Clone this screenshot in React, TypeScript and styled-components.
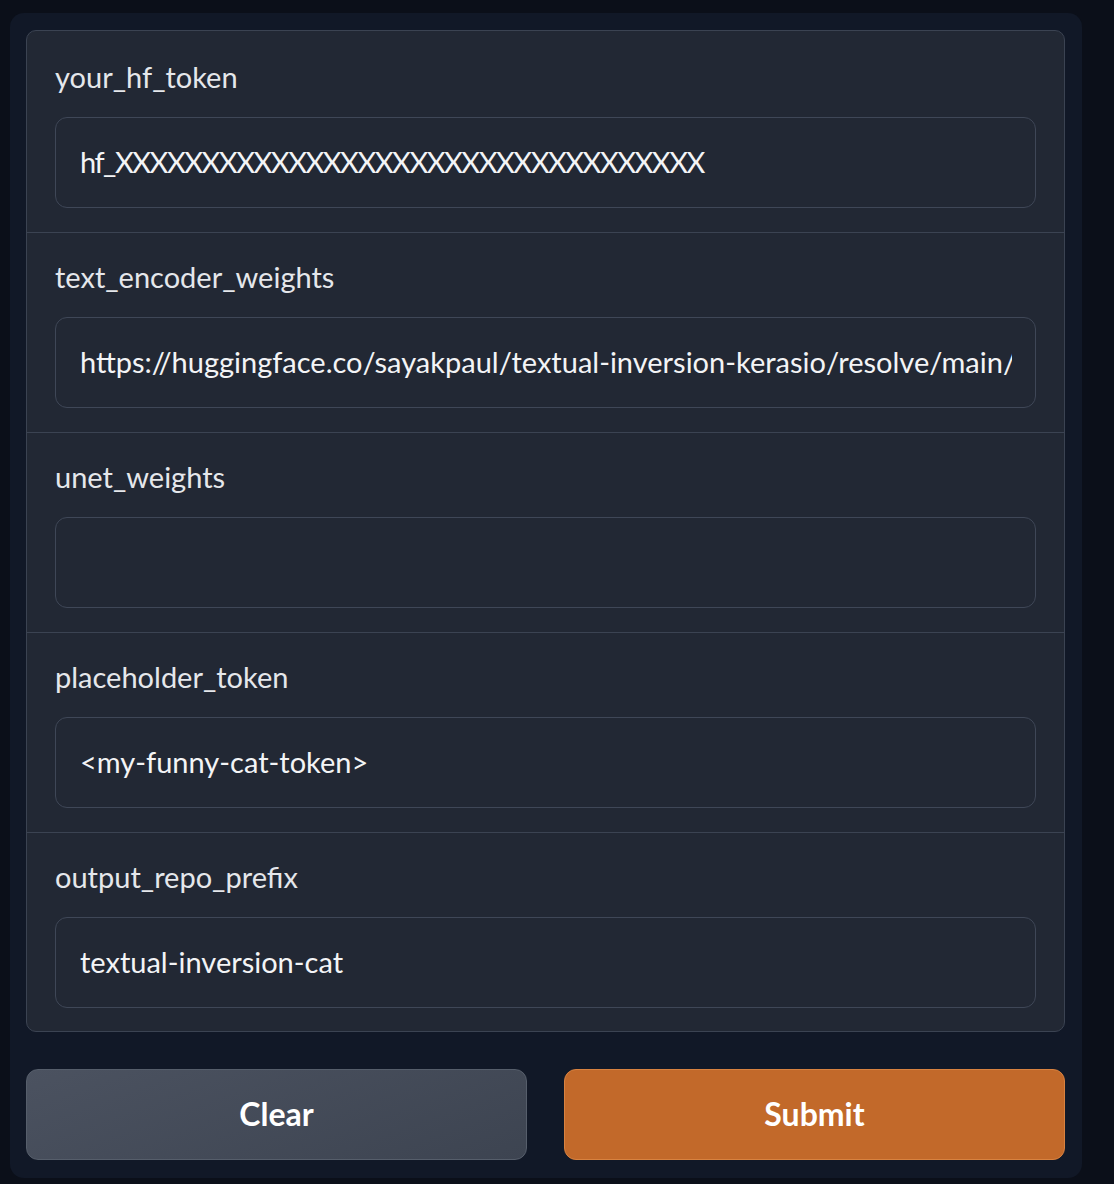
import React from "react";
import styled, { createGlobalStyle } from "styled-components";

const GlobalStyle = createGlobalStyle`
  html, body {
    margin: 0;
    padding: 0;
    background: #0b0f19;
  }
  * { box-sizing: border-box; }
`;

const Page = styled.div`
  width: 1114px;
  height: 1184px;
  padding: 13px 32px 6px 10px;
  background: #0b0f19;
  font-family: "Lato", "Open Sans", sans-serif;
`;

const Panel = styled.div`
  height: 1165px;
  background: #111827;
  border-radius: 14px;
  padding: 17px 17px 18px 16px;
  display: flex;
  flex-direction: column;
  gap: 37px;
`;

const Form = styled.div`
  background: #222834;
  border: 1px solid #3b4352;
  border-radius: 10px;
  overflow: hidden;
  display: flex;
  flex-direction: column;
`;

const Field = styled.div<{ $first?: boolean }>`
  padding: ${(p) => (p.$first ? "25px" : "23px")} 28px 24px 28px;
  border-top: ${(p) => (p.$first ? "none" : "1px solid #3b4352")};
  display: flex;
  flex-direction: column;
  gap: 16px;
`;

const Label = styled.label`
  height: 45px;
  padding-bottom: 4px;
  display: flex;
  align-items: center;
  font-size: 29px;
  color: #e5e7eb;
`;

const Input = styled.div`
  height: 91px;
  border: 1px solid #3f4757;
  border-radius: 12px;
  background: #222834;
  padding: 0 23px 3px 24px;
  display: flex;
  align-items: center;
  font-size: 29px;
  color: #f3f4f6;
`;

const Value = styled.span<{ $tight?: boolean }>`
  display: block;
  width: 100%;
  overflow: hidden;
  white-space: nowrap;
  letter-spacing: ${(p) => (p.$tight ? "-1.5px" : "0")};
`;

const Buttons = styled.div`
  display: grid;
  grid-template-columns: 1fr 1fr;
  gap: 37px;
`;

const Button = styled.button<{ $primary?: boolean }>`
  height: 91px;
  border-radius: 12px;
  padding: 0 0 3px;
  font-family: "Lato", "Open Sans", sans-serif;
  font-weight: 700;
  font-size: 32px;
  color: #ffffff;
  border: 1px solid ${(p) => (p.$primary ? "#d88240" : "#565e6b")};
  background: ${(p) =>
    p.$primary ? "#c2692a" : "linear-gradient(160deg, #4b5260 0%, #3d4451 100%)"};
`;

const fields = [
  { label: "your_hf_token", value: "hf_XXXXXXXXXXXXXXXXXXXXXXXXXXXXXXXXXX", tight: true },
  {
    label: "text_encoder_weights",
    value:
      "https://huggingface.co/sayakpaul/textual-inversion-kerasio/resolve/main/textual_inversion_kerasio.h5",
  },
  { label: "unet_weights", value: "" },
  { label: "placeholder_token", value: "<my-funny-cat-token>" },
  { label: "output_repo_prefix", value: "textual-inversion-cat" },
];

export default function App() {
  return (
    <>
      <GlobalStyle />
      <Page>
        <Panel>
          <Form>
            {fields.map((f, i) => (
              <Field key={f.label} $first={i === 0}>
                <Label>{f.label}</Label>
                <Input>
                  <Value $tight={f.tight}>{f.value}</Value>
                </Input>
              </Field>
            ))}
          </Form>
          <Buttons>
            <Button>Clear</Button>
            <Button $primary>Submit</Button>
          </Buttons>
        </Panel>
      </Page>
    </>
  );
}
